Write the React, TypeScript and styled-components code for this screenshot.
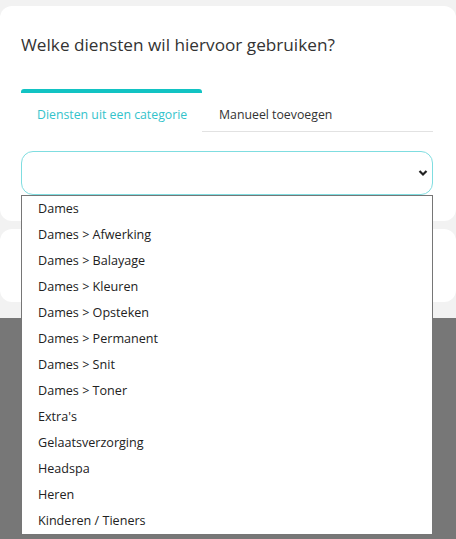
import { ReactElement } from 'react'
import styled, { createGlobalStyle } from 'styled-components'

const GlobalStyle = createGlobalStyle`
  html, body {
    margin: 0;
    padding: 0;
    background: #f2f2f2;
    font-family: "Open Sans", "DejaVu Sans", sans-serif;
  }
  #root {
    min-height: 539px;
    display: flex;
    flex-direction: column;
  }
`

const categories = [
  'Dames',
  'Dames > Afwerking',
  'Dames > Balayage',
  'Dames > Kleuren',
  'Dames > Opsteken',
  'Dames > Permanent',
  'Dames > Snit',
  'Dames > Toner',
  "Extra's",
  'Gelaatsverzorging',
  'Headspa',
  'Heren',
  'Kinderen / Tieners',
]

const Page = styled.div`
  display: flex;
  flex-direction: column;
  flex: 1;
  min-height: 539px;
`

const Content = styled.div`
  display: flex;
  flex-direction: column;
  gap: 8px;
  padding: 6px 0 16px;
  background: #f2f2f2;
`

const Card = styled.div<{ $tall?: boolean }>`
  background: #fff;
  border-radius: 12px;
  padding: ${(p) => (p.$tall ? '27px 23px 26px 21px' : '0')};
  height: ${(p) => (p.$tall ? 'auto' : '73px')};
`

const Title = styled.h2`
  margin: 0;
  font-size: 17.2px;
  line-height: 24px;
  font-weight: 400;
  color: #333;
`

const Tabs = styled.div`
  display: flex;
  margin-top: 32px;
`

const Tab = styled.div<{ $active?: boolean; $width: number }>`
  width: ${(p) => p.$width}px;
  box-sizing: border-box;
  padding: 4px 0 0 ${(p) => (p.$active ? 16 : 17)}px;
  height: 43px;
  display: flex;
  align-items: center;
  font-size: 12.3px;
  color: ${(p) => (p.$active ? '#33c3cb' : '#333')};
  border-top: 4px solid ${(p) => (p.$active ? '#12c3c3' : 'transparent')};
  border-top-left-radius: 3px;
  border-top-right-radius: 3px;
  border-bottom: 1px solid ${(p) => (p.$active ? 'transparent' : '#e2e2e2')};
`

const SelectWrap = styled.div`
  position: relative;
  margin-top: 19px;
`

const SelectBox = styled.div`
  height: 44px;
  box-sizing: border-box;
  border: 1px solid #7fdde0;
  border-radius: 12px;
  display: flex;
  align-items: center;
  justify-content: flex-end;
  padding-right: 4px;
`

const Options = styled.ul`
  position: absolute;
  top: 100%;
  left: 0;
  right: 0;
  margin: 0;
  padding: 0;
  list-style: none;
  background: #fff;
  border: 1px solid #767676;
  z-index: 5;
`

const Option = styled.li`
  height: 26px;
  line-height: 26px;
  padding-left: 16px;
  font-size: 12.6px;
  color: #222;
`

const Shade = styled.div`
  flex: 1;
  background: #777777;
`

const Chevron = () => (
  <svg width="10" height="8" viewBox="0 0 10 8">
    <path d="M1.5 2 L5 5.5 L8.5 2" fill="none" stroke="#222" strokeWidth="2.2" />
  </svg>
)

export default function App(): ReactElement {
  return (
    <Page>
      <GlobalStyle />
      <Content>
        <Card $tall>
          <Title>Welke diensten wil hiervoor gebruiken?</Title>
          <Tabs>
            <Tab $active $width={181}>Diensten uit een categorie</Tab>
            <Tab $width={231}>Manueel toevoegen</Tab>
          </Tabs>
          <SelectWrap>
            <SelectBox>
              <Chevron />
            </SelectBox>
            <Options>
              {categories.map((c) => (
                <Option key={c}>{c}</Option>
              ))}
            </Options>
          </SelectWrap>
        </Card>
        <Card />
      </Content>
      <Shade />
    </Page>
  )
}
